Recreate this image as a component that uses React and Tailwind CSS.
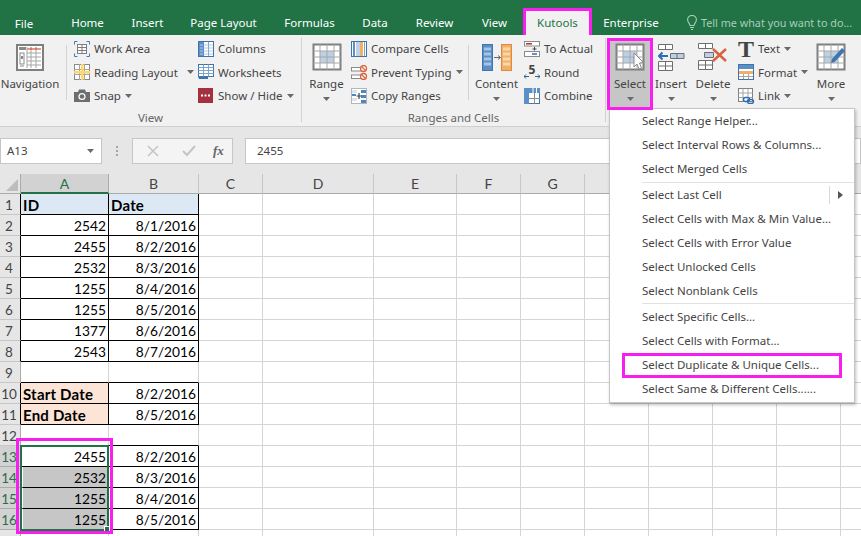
import React from 'react';

const uiFont = "font-['Noto_Sans',sans-serif]";
const sheetFont = "font-['Lato',sans-serif]";

const Caret = ({ className = '' }) => (
  <svg width="7" height="4" viewBox="0 0 7 4" className={className}><path d="M0 0h7L3.5 4z" fill="#6a6a6a" /></svg>
);

const Sep = () => <div className="w-px h-[55px] mt-[10px] bg-[#d2d2d2] shrink-0" />;

function GridPic({ children }) {
  return (
    <svg width="30" height="28" viewBox="0 0 30 28">
      <g stroke="#7f7f7f" fill="#fff" strokeWidth="1">
        <rect x="1.5" y="1.5" width="27" height="25" strokeWidth="2" />
        <rect x="8" y="8" width="14" height="12" fill="#bcd0e5" stroke="none" />
        <path d="M1.5 8h27M1.5 14h27M1.5 20h27M8 1.5v25M15 1.5v25M22 1.5v25" stroke="#a8a8a8" />
      </g>
      {children}
    </svg>
  );
}

const NavIcon = () => (
  <svg width="28" height="27" viewBox="0 0 28 27">
    <rect x="1" y="1" width="26" height="25" fill="#fff" stroke="#7f7f7f" strokeWidth="2" />
    <rect x="3" y="3" width="7" height="3" fill="#8a8a8a" />
    <path d="M11 5h14" stroke="#d0533a" strokeWidth="1.2" />
    <path d="M15 3v3M20 3v3" stroke="#d0533a" />
    <path d="M11 3v21M11 9h14M11 13h14M11 17h14M11 21h14M15 6v18M20 6v18" stroke="#a5a5a5" />
    <rect x="4" y="9" width="4" height="11" fill="none" stroke="#8a8a8a" />
    <rect x="5" y="12" width="2" height="3" fill="#8a8a8a" />
    <path d="M4 22h4" stroke="#8a8a8a" />
  </svg>
);

const WorkAreaIcon = () => (
  <svg width="16" height="16" viewBox="0 0 16 16">
    <path d="M.5 3.5V.5h3M12.5.5h3v3M15.5 12.5v3h-3M3.5 15.5h-3v-3" fill="none" stroke="#3f7cc0" />
    <rect x="3.5" y="3.5" width="9" height="9" fill="#fff" stroke="#7f7f7f" />
    <path d="M3.5 6.5h9M3.5 9.5h9M8 3.5v9" stroke="#7f7f7f" />
  </svg>
);
const ReadingIcon = () => (
  <svg width="16" height="16" viewBox="0 0 16 16">
    <rect x=".5" y=".5" width="15" height="15" fill="#fff" stroke="#8a8a8a" />
    <path d="M5.5 0v16M10.5 0v16M0 5.5h16M0 10.5h16" stroke="#a5a5a5" />
    <path d="M7 0h2.5v16H7zM0 7h16v2.5H0z" fill="#ffd766" />
  </svg>
);
const SnapIcon = () => (
  <svg width="16" height="13" viewBox="0 0 16 13">
    <path d="M0 3h4l1-2.500h6L12 3h4v10H0z" fill="#6e6e6e" />
    <circle cx="8" cy="7.500" r="3.600" fill="#fff" />
    <circle cx="8" cy="7.500" r="2.300" fill="#6e6e6e" />
  </svg>
);
const ColumnsIcon = () => (
  <svg width="16" height="16" viewBox="0 0 16 16">
    <rect x=".5" y=".5" width="15" height="15" fill="#fff" stroke="#3f74ad" />
    <rect x="1" y="1" width="5" height="14" fill="#5b8fc7" />
    <path d="M2 4h3M2 7h3M2 10h3M2 13h3M6 4h9M6 7h9M6 10h9M6 13h9" stroke="#b7cbe2" />
    <path d="M10.500 1v14" stroke="#8aa9cc" />
  </svg>
);
const WorksheetsIcon = () => (
  <svg width="16" height="16" viewBox="0 0 16 16">
    <rect x=".5" y=".5" width="15" height="12" fill="#fff" stroke="#3f74ad" />
    <path d="M.5 3.500h15M.5 6.500h15M.5 9.500h15M5.500.5v12M10.500.5v12" stroke="#7fa3cb" />
    <path d="M0 12.500h10V15H1z" fill="#3f74ad" />
  </svg>
);
const ShowHideIcon = () => (
  <svg width="15" height="15" viewBox="0 0 15 15">
    <rect width="15" height="15" fill="#a5303f" />
    <path d="M3 6.500h2v2H3zM6.500 6.500h2v2h-2zM10 6.500h2v2h-2z" fill="#fff" />
  </svg>
);
const RangeIcon = () => <GridPic />;
const CompareIcon = () => (
  <svg width="16" height="16" viewBox="0 0 16 16">
    <rect x=".5" y=".5" width="15" height="15" fill="#fff" stroke="#3f74ad" />
    <rect x="2" y="1" width="2" height="14" fill="#5b8fc7" />
    <rect x="9" y="1" width="3" height="14" fill="#f2b066" />
    <path d="M6 1v14M8 1v14M13.500 1v14" stroke="#7fa3cb" />
  </svg>
);
const PreventIcon = () => (
  <svg width="17" height="15" viewBox="0 0 17 15">
    <g fill="#fff" stroke="#8a8a8a">
      <rect x=".5" y="2.500" width="10" height="3.500" />
      <rect x=".5" y="10" width="10" height="3.500" />
    </g>
    <g fill="#fff" stroke="#d8623c" strokeWidth="1.300">
      <circle cx="12.500" cy="3.500" r="3" />
      <circle cx="12.500" cy="11.500" r="3" />
      <path d="M10.500 1.500l4 4M10.500 9.500l4 4" />
    </g>
  </svg>
);
const CopyRangesIcon = () => (
  <svg width="16" height="16" viewBox="0 0 16 16">
    <rect x=".5" y=".5" width="15" height="15" fill="#fff" stroke="#b5b5b5" />
    <path d="M1 2h5v3H1zM1 10h5v3H1z" fill="#dbe6f1" />
    <path d="M10 2h5v3h-5zM10 7h5v3h-5zM10 12h5v3h-5z" fill="#4d86c4" />
    <path d="M1 7h4" stroke="#4d86c4" strokeWidth="2" />
    <path d="M8 5v6M5.500 8h5" stroke="#444" strokeWidth="1.200" />
  </svg>
);
const ContentIcon = () => (
  <svg width="30" height="27" viewBox="0 0 30 27">
    <rect x=".5" y=".5" width="10" height="26" fill="#5b8fc7" stroke="#3f74ad" />
    <path d="M2 3.500h7v3H2zM2 8.500h7v3H2zM2 13.500h7v3H2zM2 18.500h7v3H2z" fill="#a8c4e2" />
    <rect x="19.500" y=".5" width="10" height="26" fill="#f2b066" stroke="#e0893a" />
    <path d="M21 3.500h7v3h-7zM21 8.500h7v3h-7zM21 13.500h7v3h-7zM21 18.500h7v3h-7z" fill="#f9d7ab" />
    <path d="M12 13.500h6M16 11.500l2.500 2-2.500 2" fill="none" stroke="#666" />
  </svg>
);
const ToActualIcon = () => (
  <svg width="16" height="16" viewBox="0 0 16 16">
    <rect x=".5" y=".5" width="15" height="4.500" fill="#fff" stroke="#8a8a8a" />
    <path d="M2 2.800h6" stroke="#b3302c" strokeWidth="1.500" />
    <rect x=".5" y="10.500" width="15" height="5" fill="#fff" stroke="#8a8a8a" />
    <path d="M8 13h5" stroke="#2f6db5" strokeWidth="1.500" />
    <path d="M10.500 6v3.500M8.500 8h4" stroke="#444" />
  </svg>
);
const RoundIcon = () => (
  <div className="w-[16px] flex flex-col items-center">
    <span className="text-[12px] font-bold leading-[9px] text-[#444]">5</span>
    <svg width="16" height="5" viewBox="0 0 16 5">
      <path d="M0 2.500h5M2 .5l-2 2 2 2M11 2.500h5M14 .5l2 2-2 2" fill="none" stroke="#2f5f94" />
    </svg>
  </div>
);
const CombineIcon = () => (
  <svg width="16" height="16" viewBox="0 0 16 16">
    <rect x=".5" y=".5" width="15" height="15" fill="#fff" stroke="#3f74ad" />
    <path d="M0 0h16v5H0zM0 0h5v16H0z" fill="#5b8fc7" />
    <path d="M5 10.500h11M10.500 5v11" stroke="#8a8a8a" />
    <path d="M9 0v5M12.500 0v5" stroke="#fff" />
  </svg>
);
const SelectIcon = () => (
  <GridPic>
    <path d="M19 10v14l3-3 2 5 2.500-1-2-5 4-.5z" fill="#fff" stroke="#8a8a8a" />
  </GridPic>
);
const InsertIcon = () => (
  <svg width="27" height="27" viewBox="0 0 27 27">
    <g fill="#fff" stroke="#6e6e6e">
      <path d="M.5.500h14v5H.5zM7.500.5v5" />
      <path d="M.5 17.500h14v9H.5zM.5 22h14M7.500 17.500v9" />
    </g>
    <path d="M12.500 9.500h13.500v5H12.500z" fill="#bcd0e5" stroke="#6e6e6e" />
    <path d="M19 9.500v5" stroke="#6e6e6e" />
    <path d="M1 12h9M4.500 8.500L1 12l3.500 3.500" fill="none" stroke="#2f6db5" strokeWidth="2" />
  </svg>
);
const DeleteIcon = () => (
  <svg width="30" height="28" viewBox="0 0 30 28">
    <g fill="#fff" stroke="#6e6e6e">
      <path d="M.5.500h14v5H.5zM7.500.5v5" />
      <path d="M.5 17.500h14v9H.5zM.5 22h14M7.500 17.500v9" />
    </g>
    <path d="M6.500 9.500h9v5h-9z" fill="#bcd0e5" stroke="#6e6e6e" />
    <path d="M15 6l13 12M28 6L15 18" stroke="#d9603d" strokeWidth="2.400" />
  </svg>
);
const FormatIcon = () => (
  <svg width="16" height="16" viewBox="0 0 16 16">
    <rect x=".5" y=".5" width="15" height="15" fill="#fff" stroke="#3f74ad" />
    <rect x="1" y="1" width="14" height="4" fill="#5b8fc7" />
    <rect x="1" y="7" width="14" height="3" fill="#f2b066" />
    <path d="M1 12.500h14M5.500 10v5M10.500 10v5" stroke="#a5a5a5" />
  </svg>
);
const LinkIcon = () => (
  <svg width="17" height="16" viewBox="0 0 17 16">
    <rect x=".5" y=".5" width="14" height="13" fill="#fff" stroke="#7f7f7f" />
    <path d="M.5 5h14M.5 9.500h14M5 .5v13M10 .5v13" stroke="#a5a5a5" />
    <rect x="5.500" y="9.500" width="6" height="4" rx="2" fill="none" stroke="#2f6db5" strokeWidth="1.400" />
    <rect x="9.500" y="11.500" width="6" height="4" rx="2" fill="none" stroke="#2f6db5" strokeWidth="1.400" />
  </svg>
);
const MoreIcon = () => (
  <GridPic>
    <path d="M15 20l1-4L26 5l3 3-10.500 11z" fill="#3f74ad" />
  </GridPic>
);

const Bulb = () => (
  <svg width="10" height="15" viewBox="0 0 10 15" fill="none" stroke="#a8cdb8" strokeWidth="1.100">
    <path d="M3 10.500C3 8.500.6 7.500.6 4.800a4.400 4.400 0 0 1 8.800 0c0 2.700-2.400 3.700-2.400 5.700zM3 12.500h4M4 14.500h2" />
  </svg>
);

function LargeBtn({ icon, label, width, caret = true }) {
  return (
    <div className="flex flex-col items-center pt-[8px] shrink-0" style={{ width }}>
      <div className="h-[28px] flex items-center justify-center">{icon}</div>
      <div className="mt-[5px] leading-[16px]">{label}</div>
      {caret && <Caret className="mt-[5px]" />}
    </div>
  );
}

function SmallBtn({ icon, label, caret, caretGap = 'ml-[4px]' }) {
  return (
    <div className="h-[23.5px] flex items-center whitespace-nowrap">
      <div className="w-[20px] flex items-center">{icon}</div>
      <span>{label}</span>
      {caret && <Caret className={caretGap} />}
    </div>
  );
}

const tabs = [
  ['File', 'w-[48px]'],
  ['Home', 'w-[79px]'],
  ['Insert', 'w-[41px]'],
  ['Page Layout', 'w-[111px]'],
  ['Formulas', 'w-[61px]'],
  ['Data', 'w-[70px]'],
  ['Review', 'w-[49px]'],
  ['View', 'w-[61px] ml-[5px]'],
];

function TabBar() {
  return (
    <div className="h-[35px] bg-[#217346] flex text-white text-[11.500px] whitespace-nowrap">
      {tabs.map(([name, w]) => (
        <div key={name} className={`${w} shrink-0 h-full flex justify-center leading-[18px] ${name === 'File' ? 'pt-[15px]' : 'pt-[14px]'}`}>{name}</div>
      ))}
      <div className="w-[69px] shrink-0 -ml-[2px] h-[27px] mt-[8px] border-[3px] border-b-0 border-[#f81ef0] bg-[#f1f1f1] text-[#217346] flex justify-center pt-[3px] leading-[18px]">Kutools</div>
      <div className="w-[80px] shrink-0 ml-[-1px] flex justify-center pt-[14px] leading-[18px]">Enterprise</div>
      <div className="ml-[16px] pt-[15px] shrink-0"><Bulb /></div>
      <div className="ml-[4px] pt-[14px] leading-[18px] text-[#a8cdb8] text-[10.800px] shrink-0">Tell me what you want to do...</div>
    </div>
  );
}

function Ribbon() {
  return (
    <div className="h-[92px] bg-[#f1f1f1] border-b border-[#d0d0d0] flex text-[11.500px] text-[#444]">
      {/* View group */}
      <div className="w-[301px] shrink-0 flex flex-col">
        <div className="flex h-[75px]">
          <LargeBtn icon={<NavIcon />} label="Navigation" width="60px" caret={false} />
          <div className="ml-[6px]"><Sep /></div>
          <div className="ml-[7px] w-[124px] pt-[2px]">
            <SmallBtn icon={<WorkAreaIcon />} label="Work Area" />
            <SmallBtn icon={<ReadingIcon />} label="Reading Layout" caret caretGap="ml-[9px]" />
            <SmallBtn icon={<SnapIcon />} label="Snap" caret />
          </div>
          <div className="pt-[2px]">
            <SmallBtn icon={<ColumnsIcon />} label="Columns" />
            <SmallBtn icon={<WorksheetsIcon />} label="Worksheets" />
            <SmallBtn icon={<ShowHideIcon />} label="Show / Hide" caret />
          </div>
        </div>
        <div className="text-center text-[#666] leading-[16px] mt-[2px]">View</div>
      </div>
      <div className="w-px h-[84px] mt-[3px] bg-[#d2d2d2] shrink-0" />
      {/* Ranges and Cells group */}
      <div className="w-[303px] shrink-0 flex flex-col">
        <div className="flex h-[75px]">
          <LargeBtn icon={<RangeIcon />} label="Range" width="49px" />
          <div className="w-[117px] pt-[2px] shrink-0">
            <SmallBtn icon={<CompareIcon />} label="Compare Cells" />
            <SmallBtn icon={<PreventIcon />} label="Prevent Typing" caret />
            <SmallBtn icon={<CopyRangesIcon />} label="Copy Ranges" />
          </div>
          <Sep />
          <LargeBtn icon={<ContentIcon />} label="Content" width="55px" />
          <div className="pt-[2px]">
            <SmallBtn icon={<ToActualIcon />} label="To Actual" />
            <SmallBtn icon={<RoundIcon />} label="Round" />
            <SmallBtn icon={<CombineIcon />} label="Combine" />
          </div>
        </div>
        <div className="text-center text-[#666] leading-[16px] mt-[2px]">Ranges and Cells</div>
      </div>
      <div className="w-px h-[84px] mt-[3px] bg-[#d2d2d2] shrink-0" />
      {/* Select buttons */}
      <div className="flex flex-1">
        <div className="relative z-10 ml-[1px] w-[46px] h-[72px] mt-[3px] border-[3px] border-[#f81ef0] bg-[#c6c6c6] flex flex-col items-center pt-[2px] shrink-0">
          <SelectIcon />
          <div className="mt-[5px] leading-[16px]">Select</div>
          <Caret className="mt-[5px]" />
        </div>
        <LargeBtn icon={<InsertIcon />} label="Insert" width="36px" />
        <LargeBtn icon={<DeleteIcon />} label="Delete" width="48px" />
        <div className="ml-[1px] w-[72px] pt-[2px] shrink-0">
          <SmallBtn icon={<span className="font-['Liberation_Serif',serif] font-bold text-[24px] leading-none text-[#444]">T</span>} label="Text" caret />
          <SmallBtn icon={<FormatIcon />} label="Format" caret />
          <SmallBtn icon={<LinkIcon />} label="Link" caret />
        </div>
        <LargeBtn icon={<MoreIcon />} label="More" width="42px" />
      </div>
    </div>
  );
}

function FormulaBar() {
  return (
    <div className="h-[47px] bg-[#e6e6e6] flex items-start pt-[11px] text-[11.500px] text-[#444]">
      <div className="w-[102px] h-[26px] bg-white border border-[#c6c6c6] flex items-center pl-[6px] pr-[7px] justify-between shrink-0">
        <span>A13</span>
        <Caret />
      </div>
      <div className="w-[30px] h-[26px] flex flex-col items-center justify-center gap-[2px] shrink-0">
        <div className="w-[2px] h-[2px] bg-[#a5a5a5]" />
        <div className="w-[2px] h-[2px] bg-[#a5a5a5]" />
        <div className="w-[2px] h-[2px] bg-[#a5a5a5]" />
      </div>
      <div className="w-[101px] h-[26px] bg-[#f4f4f4] border border-[#c6c6c6] flex items-center shrink-0">
        <svg width="12" height="12" viewBox="0 0 12 12" className="ml-[14px]"><path d="M1 1l10 10M11 1L1 11" stroke="#c4c4c4" strokeWidth="1.500" /></svg>
        <svg width="14" height="12" viewBox="0 0 14 12" className="ml-[23px]"><path d="M1 6l4 4 8-9" fill="none" stroke="#c4c4c4" strokeWidth="2" /></svg>
        <span className="ml-[17px] font-['Liberation_Serif',serif] italic font-bold text-[13px] text-[#666]">fx</span>
      </div>
      <div className="ml-[3px] w-[9px]" />
      <div className="flex-1 h-[26px] bg-white border border-[#c6c6c6] flex items-center pl-[11px]">2455</div>
    </div>
  );
}

const colWidths = ['w-[88px]', 'w-[90px]', 'w-[64px]', 'w-[111px]', 'w-[83px]', 'w-[64px]', 'w-[64px]', 'w-[64px]', 'w-[64px]', 'w-[64px]', 'w-[64px]', 'w-[21px]'];
const colNames = ['A', 'B', 'C', 'D', 'E', 'F', 'G', '', '', '', '', ''];

const bordered = new Set([1, 2, 3, 4, 5, 6, 7, 8, 10, 11, 13, 14, 15, 16]);
const rows = {
  1: [{ t: 'ID', b: 1, bg: 'bg-[#dce9f5]' }, { t: 'Date', b: 1, bg: 'bg-[#dce9f5]' }],
  2: [{ t: '2542' }, { t: '8/1/2016' }],
  3: [{ t: '2455' }, { t: '8/2/2016' }],
  4: [{ t: '2532' }, { t: '8/3/2016' }],
  5: [{ t: '1255' }, { t: '8/4/2016' }],
  6: [{ t: '1255' }, { t: '8/5/2016' }],
  7: [{ t: '1377' }, { t: '8/6/2016' }],
  8: [{ t: '2543' }, { t: '8/7/2016' }],
  10: [{ t: 'Start Date', b: 1, bg: 'bg-[#fce4d6]' }, { t: '8/2/2016' }],
  11: [{ t: 'End Date', b: 1, bg: 'bg-[#fce4d6]' }, { t: '8/5/2016' }],
  13: [{ t: '2455' }, { t: '8/2/2016' }],
  14: [{ t: '2532', sel: true }, { t: '8/3/2016' }],
  15: [{ t: '1255', sel: true }, { t: '8/4/2016' }],
  16: [{ t: '1255', sel: true }, { t: '8/5/2016' }],
};

function Cell({ cell, width, black, blackBottom }) {
  const border = black ? 'border-black' : blackBottom ? 'border-r-[#d4d4d4] border-b-black' : 'border-[#d4d4d4]';
  if (!cell) return <div className={`${width} h-[21px] border-r border-b shrink-0 ${border}`} />;
  const align = cell.b ? 'justify-start pl-[2px] font-bold text-[15px] tracking-[0.2px]' : 'justify-end pr-[2px]';
  return (
    <div className={`${width} h-[21px] border-r border-b shrink-0 flex items-center pt-[3px] ${align} ${cell.bg || ''} ${cell.sel ? 'bg-[#c6c6c6] border-l-2 border-l-white' : ''} ${border}`}>
      {cell.t}
    </div>
  );
}

function Sheet() {
  return (
    <div className={`relative ${sheetFont} text-[13.750px] text-black`}>
      {/* column headers */}
      <div className="flex h-[20px] bg-[#e6e6e6] text-[#444]">
        <div className="w-[21px] h-[20px] border-r border-b border-[#ababab] relative shrink-0 bg-[#e6e6e6]">
          <svg width="12" height="12" viewBox="0 0 12 12" className="absolute right-[2px] bottom-[2px]"><path d="M12 0v12H0z" fill="#bdbdbd" /></svg>
        </div>
        {colWidths.map((w, i) => (
          <div key={i} className={`${w} shrink-0 flex items-center justify-center border-r border-b text-[14px] ${i === 0 ? 'bg-[#d2d2d2] text-[#217346] border-b-2 border-b-[#217346] border-r-[#ababab]' : 'border-[#ababab] border-r-[#c6c6c6]'}`}>
            {colNames[i]}
          </div>
        ))}
      </div>
      {/* rows */}
      {Array.from({ length: 17 }, (_, i) => i + 1).map((n) => {
        const inRange = n >= 13 && n <= 16;
        const data = rows[n] || [];
        return (
          <div key={n} className="flex h-[21px]">
            <div className={`w-[21px] h-[21px] shrink-0 border-b border-r flex items-center justify-center pr-[2px] pt-[2px] text-[13.500px] ${inRange ? 'bg-[#d2d2d2] text-[#2f6b4a] border-b-[#ababab] border-r-[#217346]' : 'bg-[#e6e6e6] text-[#444] border-b-[#c6c6c6]'} ${bordered.has(n) && !inRange ? 'border-r-black' : ''} ${!bordered.has(n) ? 'border-r-[#ababab]' : ''}`}>
              {n < 17 ? n : ''}
            </div>
            {colWidths.map((w, i) => (
              <Cell key={i} width={w} cell={data[i]} black={i < 2 && bordered.has(n)} blackBottom={i < 2 && (n === 9 || n === 12)} />
            ))}
          </div>
        );
      })}
      {/* selection box */}
      <div className="absolute left-[20px] top-[271px] w-[89px] h-[86px] border-2 border-[#217346] pointer-events-none">
        <div className="absolute -right-[3px] -bottom-[3px] w-[6px] h-[6px] bg-[#217346] border border-white" />
      </div>
      <div className="absolute left-[16px] top-[264px] w-[97px] h-[96px] border-[3px] border-[#f81ef0] pointer-events-none" />
    </div>
  );
}

const menuGroups = [
  ['Select Range Helper...', 'Select Interval Rows & Columns...', 'Select Merged Cells'],
  ['Select Last Cell', 'Select Cells with Max & Min Value...', 'Select Cells with Error Value', 'Select Unlocked Cells', 'Select Nonblank Cells'],
  ['Select Specific Cells...', 'Select Cells with Format...', 'Select Duplicate & Unique Cells...', 'Select Same & Different Cells......'],
];

function SelectMenu() {
  return (
    <div className="absolute left-[609px] top-[108px] w-[246px] h-[295px] bg-white border border-[#c6c6c6] shadow-[1px_2px_3px_rgba(0,0,0,0.25)] text-[11.500px] text-[#444]">
      {menuGroups.map((group, g) => (
        <div key={g} className={`${g > 0 ? 'border-t border-[#e1e1e1] ml-[32px]' : 'pb-[1px]'} ${g === 2 ? 'pt-[1px]' : ''}`}>
          {group.map((item) => (
            <div key={item} className={`relative h-[24px] flex items-center whitespace-nowrap ${g > 0 ? '' : 'pl-[32px]'}`}>
              {item}
              {item === 'Select Last Cell' && (
                <div className="absolute left-[187px] top-[3px] h-[18px] pl-[8px] border-l border-[#d9d9d9] flex items-center">
                  <svg width="5" height="8" viewBox="0 0 5 8"><path d="M0 0l5 4-5 4z" fill="#555" /></svg>
                </div>
              )}
              {item.startsWith('Select Duplicate') && (
                <div className="absolute -left-[20px] top-[0px] w-[220px] h-[25px] border-[3px] border-[#f81ef0]" />
              )}
            </div>
          ))}
        </div>
      ))}
    </div>
  );
}

export default function App() {
  return (
    <div className={`relative w-[861px] h-[536px] overflow-hidden bg-white ${uiFont}`}>
      <TabBar />
      <Ribbon />
      <FormulaBar />
      <Sheet />
      <SelectMenu />
    </div>
  );
}
